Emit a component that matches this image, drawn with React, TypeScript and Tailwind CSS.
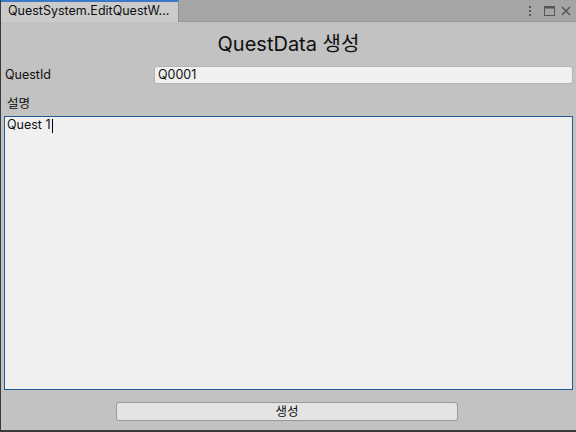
export default function App() {
  const font = { fontFamily: '"Inter", "Noto Sans CJK KR", sans-serif' };
  return (
    <div
      className="w-[576px] h-[432px] flex flex-col bg-[#c2c2c2] border-l border-b-2 border-[#3a3a3a] overflow-hidden text-[#0f0f0f]"
      style={font}
    >
      {/* 탭 바 */}
      <div className="h-[22px] flex bg-[#a5a5a5] border-b border-[#999999]">
        <div className="w-[178px] h-[22px] bg-[#cbcbcb] border-t-2 border-[#3a79c4] border-r border-r-[#8f8f8f] pl-[7px] text-[12.5px] leading-[18px] whitespace-nowrap">
          QuestSystem.EditQuestW...
        </div>
        <div className="flex-1" />
        <div className="flex items-center pr-[5px]">
          <svg width="4" height="12" viewBox="0 0 4 12" className="mr-[12px]">
            <rect x="1" y="1" width="2" height="2" fill="#555" />
            <rect x="1" y="5" width="2" height="2" fill="#555" />
            <rect x="1" y="9" width="2" height="2" fill="#555" />
          </svg>
          <svg width="11" height="10" viewBox="0 0 11 10" className="mr-[6px]">
            <rect x="0.5" y="0.5" width="10" height="9" fill="none" stroke="#555" />
            <rect x="0.5" y="0.5" width="10" height="2" fill="#555" />
          </svg>
          <svg width="10" height="10" viewBox="0 0 10 10">
            <path d="M1 1 L9 9 M9 1 L1 9" stroke="#555" strokeWidth="1.5" />
          </svg>
        </div>
      </div>

      {/* 본문 */}
      <div className="flex-1 flex flex-col pl-[3px] pr-[3px]">
        <div className="text-center text-[20px] leading-[24px] mt-[10px] h-[28px]">QuestData 생성</div>
        <div className="flex items-center mt-[6px] h-[18px]">
          <div className="w-[150px] pl-[1px] text-[12.5px]">QuestId</div>
          <div className="flex-1 h-[18px] bg-[#f0f0f0] border border-[#b4b4b4] rounded-[3px] pl-[3px] text-[12.5px] leading-[16px]">
            Q0001
          </div>
        </div>
        <div className="mt-[12px] pl-[3px] text-[12.5px] leading-[16px]">설명</div>
        <div className="mt-[4px] h-[274px] bg-[#f0f0f0] border border-[#245a95] pl-[2px] text-[12.5px] leading-[16px]">
          Quest 1<span className="inline-block w-[1px] h-[14px] bg-black align-middle ml-[1px]" />
        </div>
        <div className="flex mt-[12px]">
          <div className="ml-[112px] w-[342px] h-[19px] bg-[#e4e4e4] border border-[#999999] rounded-[3px] text-center text-[12.5px] leading-[17px]">
            생성
          </div>
        </div>
      </div>
    </div>
  );
}
